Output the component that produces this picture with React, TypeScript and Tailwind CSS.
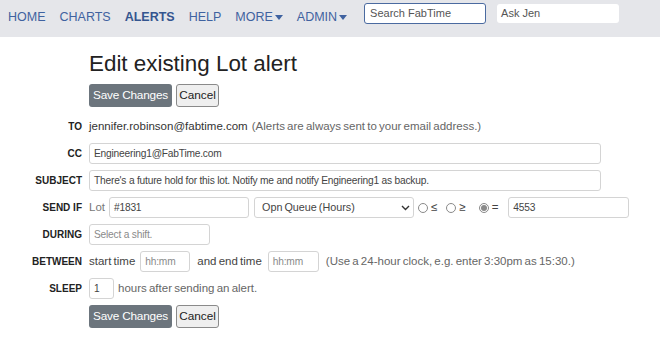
import React from "react";

const navItems = ["HOME", "CHARTS", "ALERTS", "HELP", "MORE", "ADMIN"];

const Caret = () => (
  <svg width="8" height="5" viewBox="0 0 8 5" className="ml-[2px] inline-block">
    <path d="M0 0h8L4 5z" fill="currentColor" />
  </svg>
);

const Radio = ({ checked }: { checked?: boolean }) => (
  <span className="inline-flex h-[10px] w-[10px] items-center justify-center rounded-full border border-[#8a8a8a] bg-white">
    {checked && <span className="h-[6px] w-[6px] rounded-full bg-[#8a8a8a]" />}
  </span>
);

const Field = ({
  width,
  value,
  placeholder,
}: {
  width: string;
  value?: string;
  placeholder?: string;
}) => (
  <div
    className={`flex h-[21px] shrink-0 ${width} items-center rounded-[3px] border border-[#d4d4d4] bg-white px-[4px] text-[10.2px] tracking-[-0.2px] [word-spacing:0px] ${
      value ? "text-[#444]" : "text-[#8a8a8a]"
    }`}
  >
    {value || placeholder}
  </div>
);

const Label = ({ children }: { children: React.ReactNode }) => (
  <div className="flex h-[21px] items-center justify-end text-[10px] font-bold text-[#222] [word-spacing:0px]">
    {children}
  </div>
);

const Buttons = () => (
  <div className="flex gap-[4px] [word-spacing:0px]">
    <button className="h-[23px] w-[83px] rounded-[3px] bg-[#6c757d] text-[11.8px] tracking-[-0.2px] text-white">
      Save Changes
    </button>
    <button className="h-[23px] w-[43px] rounded-[3px] border border-[#8a8a8a] bg-[#efefef] text-[11.8px] text-[#222]">
      Cancel
    </button>
  </div>
);

export default function App() {
  return (
    <div className="h-[350px] w-[660px] bg-white font-['Liberation_Sans',Arial,sans-serif]">
      <div className="flex h-[37px] items-start bg-[#e5e6ea] pl-[8px] pt-[8px]">
        <div className="flex gap-[14px] text-[12.5px] text-[#3f62a0]">
          {navItems.map((item) => (
            <span key={item} className={`flex items-center ${item === "ALERTS" ? "font-bold text-[#34558f]" : ""}`}>
              {item}
              {(item === "MORE" || item === "ADMIN") && <Caret />}
            </span>
          ))}
        </div>
        <div className="ml-[17px] mt-[-5px] flex h-[21px] w-[122px] items-center rounded-[3px] border border-[#4a6aa0] bg-white px-[5px] text-[11px] text-[#555]">
          Search FabTime
        </div>
        <div className="ml-[11px] mt-[-4px] flex h-[19px] w-[122px] items-center rounded-[3px] bg-white px-[4px] text-[11px] text-[#555]">
          Ask Jen
        </div>
      </div>

      <div className="pl-[89px] pt-[14px]">
        <h1 className="text-[22.4px] leading-[26px] text-[#222]">Edit existing Lot alert</h1>
        <div className="mt-[7px]">
          <Buttons />
        </div>
      </div>

      <div className="mt-[9px] grid grid-cols-[82px_1fr] gap-x-[7px] gap-y-[6px] [word-spacing:-1px]">
        <Label>TO</Label>
        <div className="flex h-[21px] items-center text-[11.5px] text-[#333]">
          jennifer.robinson@fabtime.com
          <span className="ml-[4px] text-[#666]">(Alerts are always sent to your email address.)</span>
        </div>

        <Label>CC</Label>
        <Field width="w-[512px]" value="Engineering1@FabTime.com" />

        <Label>SUBJECT</Label>
        <Field width="w-[512px]" value="There's a future hold for this lot. Notify me and notify Engineering1 as backup." />

        <Label>SEND IF</Label>
        <div className="flex h-[21px] items-center text-[11.5px] text-[#777]">
          <span className="mr-[4px]">Lot</span>
          <Field width="w-[140px]" value="#1831" />
          <div className="ml-[5px] flex h-[21px] w-[160px] items-center justify-between rounded-[3px] border border-[#d4d4d4] bg-white pl-[7px] pr-[3px] text-[10.8px] text-[#444]">
            Opn Queue (Hours)
            <svg width="9" height="6" viewBox="0 0 9 6">
              <path d="M1 1l3.5 3.5L8 1" fill="none" stroke="#333" strokeWidth="1.4" />
            </svg>
          </div>
          <span className="ml-[4px] flex items-center gap-[3px] text-[#444]">
            <Radio /> ≤
          </span>
          <span className="ml-[9px] flex items-center gap-[3px] text-[#444]">
            <Radio /> ≥
          </span>
          <span className="ml-[13px] flex items-center gap-[3px] text-[#444]">
            <Radio checked /> =
          </span>
          <div className="ml-[10px]">
            <Field width="w-[121px]" value="4553" />
          </div>
        </div>

        <Label>DURING</Label>
        <Field width="w-[121px]" placeholder="Select a shift." />

        <Label>BETWEEN</Label>
        <div className="flex h-[21px] items-center text-[11.5px] text-[#444]">
          <span className="mr-[5px]">start time</span>
          <Field width="w-[50px]" placeholder="hh:mm" />
          <span className="ml-[7px] mr-[6px]">and end time</span>
          <Field width="w-[51px]" placeholder="hh:mm" />
          <span className="ml-[7px] text-[#666]">(Use a 24-hour clock, e.g. enter 3:30pm as 15:30.)</span>
        </div>

        <Label>SLEEP</Label>
        <div className="flex h-[21px] items-center text-[11.5px] text-[#666]">
          <Field width="w-[25px]" value="1" />
          <span className="ml-[4px]">hours after sending an alert.</span>
        </div>

        <div />
        <Buttons />
      </div>
    </div>
  );
}
